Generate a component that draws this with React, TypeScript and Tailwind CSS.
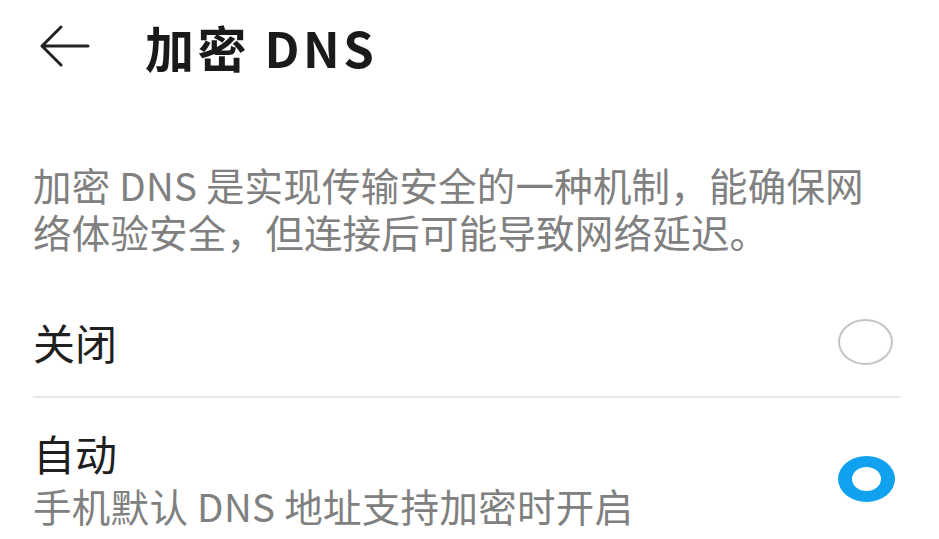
import React from "react";

const font = { fontFamily: '"Noto Sans CJK SC", "Noto Sans", sans-serif' };

const Radio = ({ checked }: { checked: boolean }) =>
  checked ? (
    <div className="w-[57px] h-[46px] rounded-[50%] border-x-[14px] border-y-[11px] border-[#10a2ee] bg-white" />
  ) : (
    <div className="w-[55px] h-[46px] rounded-[50%] border-2 border-[#c4c4c4] bg-white" />
  );

export default function App() {
  return (
    <div className="w-[939px] h-[539px] bg-white overflow-hidden" style={font}>
      <div className="h-[92px] flex items-center pl-[40px]">
        <svg width="50" height="42" viewBox="0 0 50 42" fill="none">
          <path d="M48 21H3M21 2 2 21l19 19" stroke="#222" strokeWidth="3" strokeLinecap="round" strokeLinejoin="round" />
        </svg>
        <h1 className="ml-[55px] text-[49px] leading-none font-bold text-[#1a1a1a] tracking-[3.5px]">加密 DNS</h1>
      </div>

      <div className="pl-[33px] pr-[39px]">
        <p className="mt-[69px] w-[845px] text-[38.5px] leading-[47px] text-[#808080] tracking-[0.2px]">
          加密 DNS 是实现传输安全的一种机制，能确保网络体验安全，但连接后可能导致网络延迟。
        </p>

        <div className="mt-[62px] pb-[29px] border-b-2 border-[#e8e8e8] flex items-center justify-between pr-[7px]">
          <span className="text-[42px] leading-[50px] text-[#1f1f1f]">关闭</span>
          <Radio checked={false} />
        </div>

        <div className="flex items-center justify-between pr-[5px]">
          <div>
            <div className="mt-[30px] text-[42px] leading-[50px] text-[#1f1f1f]">自动</div>
            <div className="mt-[4px] text-[38.5px] leading-[47px] text-[#808080] tracking-[0.3px]">手机默认 DNS 地址支持加密时开启</div>
          </div>
          <div className="mt-[30px]">
            <Radio checked={true} />
          </div>
        </div>
      </div>
    </div>
  );
}
